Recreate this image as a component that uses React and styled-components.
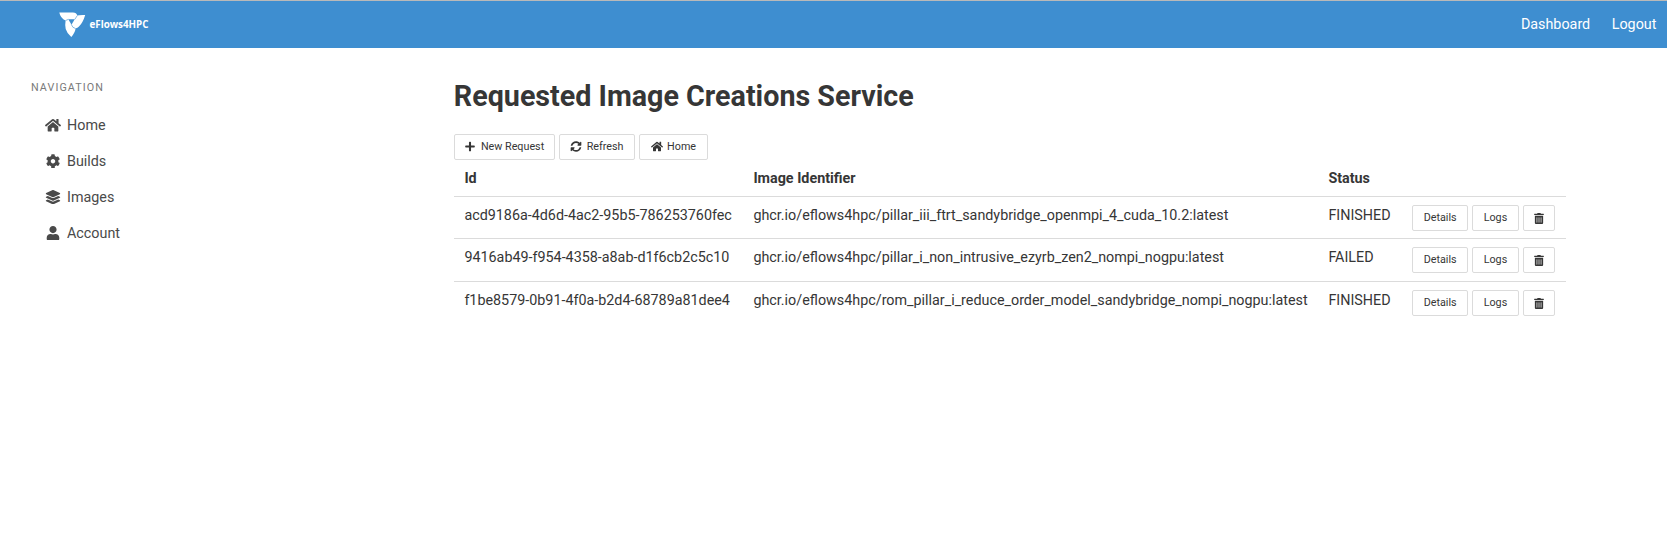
import React from "react";
import styled, { createGlobalStyle } from "styled-components";
import { FaHome, FaCog, FaLayerGroup, FaUser, FaPlus, FaSyncAlt, FaTrashAlt } from "react-icons/fa";

const GlobalStyle = createGlobalStyle`
  * { box-sizing: border-box; }
  body {
    margin: 0;
    background: #fff;
    color: #363636;
    font-family: Roboto, "Liberation Sans", sans-serif;
    font-size: 14.33px;
    line-height: 1.5;
  }
`;

const Navbar = styled.header`
  display: flex;
  align-items: center;
  justify-content: space-between;
  height: 48px;
  padding: 0 10.6px 0 59px;
  border-top: 1px solid #b9b9b9;
  background: #3e8ed0;
  color: #fff;
`;

const Brand = styled.div`
  display: flex;
  align-items: center;
  gap: 3.5px;
  font: 700 9.8px/14px "Open Sans", sans-serif;
`;

const NavLinks = styled.nav`
  display: flex;
  gap: 21.5px;
`;

const Page = styled.div`
  display: flex;
  align-items: flex-start;
`;

const Sidebar = styled.aside`
  width: 453.8px;
  padding: 32px 31px 0;
`;

const MenuLabel = styled.p`
  margin: 0 0 12px;
  color: #7a7a7a;
  font-size: 10.75px;
  line-height: 16px;
  letter-spacing: 1.08px;
  text-transform: uppercase;
`;

const MenuItem = styled.a`
  display: flex;
  align-items: center;
  gap: 6px;
  height: 36px;
  padding-left: 14px;
  color: #4a4a4a;
  svg { width: 16px; height: 14.4px; margin-bottom: 2px; }
`;

const Main = styled.main`
  width: 1112px;
  padding-top: 32px;
`;

const Title = styled.h1`
  margin: 0;
  font-size: 28.68px;
  line-height: 32px;
  font-weight: 700;
`;

const Toolbar = styled.div`
  display: flex;
  gap: 4px;
  margin-top: 22px;
`;

const Button = styled.button`
  display: inline-flex;
  align-items: center;
  justify-content: center;
  gap: 4.5px;
  width: ${(p) => p.$width}px;
  height: 26.4px;
  padding: 0 0 1px;
  border: 1px solid #dbdbdb;
  border-radius: 2px;
  background: #fff;
  color: #363636;
  font: 400 10.75px/16px Roboto, "Liberation Sans", sans-serif;
  svg { width: 12px; height: 11px; }
`;

const RowButton = styled(Button)`
  padding: 0;
`;

const Table = styled.table`
  width: 100%;
  table-layout: fixed;
  border-collapse: collapse;
`;

const Column = styled.col`
  width: ${(p) => p.$width}px;
`;

const HeadCell = styled.th`
  height: 36px;
  padding: 7.2px 10.6px;
  border-bottom: 1px solid #dbdbdb;
  text-align: left;
  vertical-align: top;
  font-weight: 700;
`;

const Row = styled.tr`
  height: ${(p) => p.$height}px;
`;

const Cell = styled.td`
  padding: 7.6px 10.6px 6px;
  border-bottom: ${(p) => (p.$last ? "0" : "1px solid #dbdbdb")};
  vertical-align: top;
  white-space: nowrap;
`;

const Actions = styled.div`
  display: flex;
  gap: 4px;
`;

const menu = [
  ["Home", FaHome],
  ["Builds", FaCog],
  ["Images", FaLayerGroup],
  ["Account", FaUser],
];

const builds = [
  ["acd9186a-4d6d-4ac2-95b5-786253760fec", "ghcr.io/eflows4hpc/pillar_iii_ftrt_sandybridge_openmpi_4_cuda_10.2:latest", "FINISHED", 42],
  ["9416ab49-f954-4358-a8ab-d1f6cb2c5c10", "ghcr.io/eflows4hpc/pillar_i_non_intrusive_ezyrb_zen2_nompi_nogpu:latest", "FAILED", 43],
  ["f1be8579-0b91-4f0a-b2d4-68789a81dee4", "ghcr.io/eflows4hpc/rom_pillar_i_reduce_order_model_sandybridge_nompi_nogpu:latest", "FINISHED", 42],
];

function Logo() {
  return (
    <svg width="27" height="26" viewBox="0 0 27 26" aria-hidden="true">
      <path fill="#fff" d="M.3 .6H14Q17.500 .6 18.300 3.600Q20 2.800 26.200 3Q24 10.500 20 14.500Q18.500 16 16.500 16.500Q16.500 20 12.300 25Q8 21.500 6.700 17Q5.800 13 6.600 8.500Q1.500 6.500 .3 .6Z" />
      <path fill="#3e8ed0" d="M9.300 7.200H15.700L12.500 12.800Z" />
      <path fill="none" stroke="#3e8ed0" strokeWidth=".6" d="M18.300 3.600L15.700 7.500M6.600 8.500L9.500 7.300M12.300 12.500Q13.500 16 16.500 16.500" />
    </svg>
  );
}

export default function App() {
  return (
    <>
      <GlobalStyle />
      <Navbar>
        <Brand><Logo />eFlows4HPC</Brand>
        <NavLinks><span>Dashboard</span><span>Logout</span></NavLinks>
      </Navbar>
      <Page>
        <Sidebar>
          <MenuLabel>Navigation</MenuLabel>
          {menu.map(([label, Icon]) => (
            <MenuItem key={label}><Icon />{label}</MenuItem>
          ))}
        </Sidebar>
        <Main>
          <Title>Requested Image Creations Service</Title>
          <Toolbar>
            <Button $width={101}><FaPlus />New Request</Button>
            <Button $width={76}><FaSyncAlt />Refresh</Button>
            <Button $width={69}><FaHome />Home</Button>
          </Toolbar>
          <Table>
            <colgroup>
              <Column $width={289} /><Column $width={575} /><Column $width={83.6} /><Column $width={164.4} />
            </colgroup>
            <thead>
              <tr><HeadCell>Id</HeadCell><HeadCell>Image Identifier</HeadCell><HeadCell>Status</HeadCell><HeadCell /></tr>
            </thead>
            <tbody>
              {builds.map(([id, image, status, height], i) => {
                const last = i === builds.length - 1;
                return (
                  <Row key={id} $height={height}>
                    <Cell $last={last}>{id}</Cell>
                    <Cell $last={last}>{image}</Cell>
                    <Cell $last={last}>{status}</Cell>
                    <Cell $last={last}>
                      <Actions>
                        <RowButton $width={57}>Details</RowButton>
                        <RowButton $width={47}>Logs</RowButton>
                        <RowButton $width={33} aria-label="Delete"><FaTrashAlt /></RowButton>
                      </Actions>
                    </Cell>
                  </Row>
                );
              })}
            </tbody>
          </Table>
        </Main>
      </Page>
    </>
  );
}
